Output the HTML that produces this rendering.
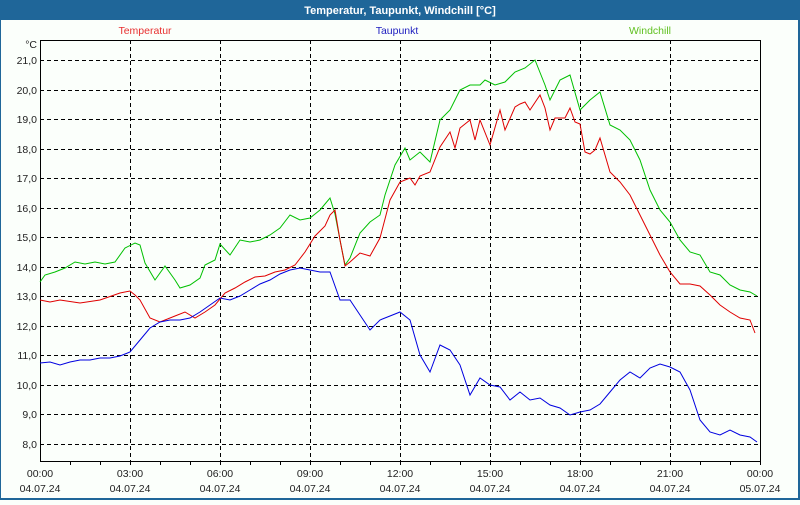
<!DOCTYPE html>
<html><head><meta charset="utf-8"><style>
body{margin:0;width:800px;height:500px;overflow:hidden;background:#fbfffb;font-family:"Liberation Sans",sans-serif}
</style></head><body>
<svg width="800" height="500" xmlns="http://www.w3.org/2000/svg" font-family="Liberation Sans, sans-serif" font-size="10.5">
<rect x="0" y="0" width="800" height="500" fill="#fbfffb"/>
<rect x="0" y="0" width="800" height="20" fill="#1f6699"/>
<rect x="0" y="0" width="1" height="500" fill="#1f6699"/>
<rect x="798" y="0" width="2" height="500" fill="#1f6699"/>
<rect x="0" y="498" width="800" height="2" fill="#1f6699"/>
<text x="400" y="14" text-anchor="middle" fill="#fff" font-weight="bold" font-size="11">Temperatur, Taupunkt, Windchill [°C]</text>
<text x="145" y="34" text-anchor="middle" fill="#e83030">Temperatur</text>
<text x="397" y="34" text-anchor="middle" fill="#2020c0">Taupunkt</text>
<text x="650" y="34" text-anchor="middle" fill="#60c020">Windchill</text>
<g stroke="#000" stroke-dasharray="4,3" stroke-width="1">
<line x1="40" y1="60.5" x2="760" y2="60.5"/><line x1="40" y1="90.5" x2="760" y2="90.5"/><line x1="40" y1="119.5" x2="760" y2="119.5"/><line x1="40" y1="149.5" x2="760" y2="149.5"/><line x1="40" y1="178.5" x2="760" y2="178.5"/><line x1="40" y1="208.5" x2="760" y2="208.5"/><line x1="40" y1="237.5" x2="760" y2="237.5"/><line x1="40" y1="267.5" x2="760" y2="267.5"/><line x1="40" y1="296.5" x2="760" y2="296.5"/><line x1="40" y1="326.5" x2="760" y2="326.5"/><line x1="40" y1="355.5" x2="760" y2="355.5"/><line x1="40" y1="385.5" x2="760" y2="385.5"/><line x1="40" y1="414.5" x2="760" y2="414.5"/><line x1="40" y1="444.5" x2="760" y2="444.5"/>
<line x1="130.5" y1="40" x2="130.5" y2="461"/><line x1="220.5" y1="40" x2="220.5" y2="461"/><line x1="310.5" y1="40" x2="310.5" y2="461"/><line x1="400.5" y1="40" x2="400.5" y2="461"/><line x1="490.5" y1="40" x2="490.5" y2="461"/><line x1="580.5" y1="40" x2="580.5" y2="461"/><line x1="670.5" y1="40" x2="670.5" y2="461"/>
</g>
<rect x="40.5" y="40.5" width="720" height="421" fill="none" stroke="#000"/>
<g stroke="#000"><path d="M70.5 461v4M100.5 461v4M130.5 461v4M160.5 461v4M190.5 461v4M220.5 461v4M250.5 461v4M280.5 461v4M310.5 461v4M340.5 461v4M370.5 461v4M400.5 461v4M430.5 461v4M460.5 461v4M490.5 461v4M520.5 461v4M550.5 461v4M580.5 461v4M610.5 461v4M640.5 461v4M670.5 461v4M700.5 461v4M730.5 461v4M760.5 461v4"/></g>
<g fill="#222" text-anchor="end">
<text x="37" y="48">°C</text>
<text x="37" y="64">21,0</text><text x="37" y="94">20,0</text><text x="37" y="123">19,0</text><text x="37" y="153">18,0</text><text x="37" y="182">17,0</text><text x="37" y="212">16,0</text><text x="37" y="241">15,0</text><text x="37" y="271">14,0</text><text x="37" y="300">13,0</text><text x="37" y="330">12,0</text><text x="37" y="359">11,0</text><text x="37" y="389">10,0</text><text x="37" y="418">9,0</text><text x="37" y="448">8,0</text>
</g>
<g fill="#222" text-anchor="middle">
<text x="40" y="477">00:00</text><text x="130" y="477">03:00</text><text x="220" y="477">06:00</text><text x="310" y="477">09:00</text><text x="400" y="477">12:00</text><text x="490" y="477">15:00</text><text x="580" y="477">18:00</text><text x="670" y="477">21:00</text><text x="760" y="477">00:00</text>
<text x="40" y="492">04.07.24</text><text x="130" y="492">04.07.24</text><text x="220" y="492">04.07.24</text><text x="310" y="492">04.07.24</text><text x="400" y="492">04.07.24</text><text x="490" y="492">04.07.24</text><text x="580" y="492">04.07.24</text><text x="670" y="492">04.07.24</text><text x="760" y="492">05.07.24</text>
</g>
<g fill="none" stroke-width="1">
<polyline stroke="#00c000" points="40,282 45,275 55,272 65,268 75,262 85,264 95,262 105,264 115,262 125,248 135,243 140,245 145,263 155,280 165,266 175,280 180,288 190,285 200,278 205,265 215,260 220,244 230,255 240,240 250,242 260,240 270,235 280,228 290,215 300,220 310,218 320,210 330,198 335,214 340,240 345,265 350,258 360,233 370,222 380,215 385,195 395,165 405,148 410,160 420,152 430,162 440,120 450,110 460,90 470,85 480,85 485,80 495,85 505,82 515,72 525,68 535,60 545,85 550,100 560,80 570,75 580,110 590,100 600,92 610,125 620,130 630,140 640,160 650,190 660,210 670,222 680,240 690,252 700,255 710,272 720,275 730,285 740,290 750,292 757,296"/>
<polyline stroke="#e00000" points="40,300 50,302 60,300 80,303 100,300 120,293 130,291 135,295 140,300 150,318 160,322 175,316 185,312 195,318 205,312 215,305 225,293 235,288 245,282 255,277 265,276 275,272 285,270 295,265 305,252 315,236 325,226 330,215 335,210 340,240 345,266 350,262 360,253 370,256 380,238 390,200 400,182 410,178 415,185 420,176 430,172 440,147 450,132 455,148 460,128 470,120 475,140 480,120 490,145 500,110 505,130 515,107 520,104 525,102 530,110 540,95 545,108 550,130 555,118 565,118 570,108 575,122 580,124 585,152 590,154 595,150 600,138 610,172 620,182 630,195 640,215 650,235 660,255 670,272 680,284 690,284 700,286 710,295 720,305 730,312 740,318 750,320 755,333"/>
<polyline stroke="#0000e0" points="40,363 50,362 60,365 70,362 80,360 90,360 100,358 110,358 120,356 130,352 140,340 150,328 160,322 170,320 180,320 190,318 200,312 210,305 220,298 230,300 240,296 250,290 260,284 270,280 280,274 290,270 300,268 310,270 320,272 330,272 340,300 350,300 360,315 370,330 380,320 390,316 400,312 410,320 420,355 430,372 440,345 450,350 460,365 470,395 480,378 490,385 500,387 510,400 520,392 530,400 540,398 550,405 560,408 570,415 580,412 590,410 600,404 610,392 620,380 630,372 640,378 650,368 660,364 670,367 680,372 690,390 700,420 710,432 720,435 730,430 740,435 750,437 757,442"/>
</g>
</svg>
</body></html>
